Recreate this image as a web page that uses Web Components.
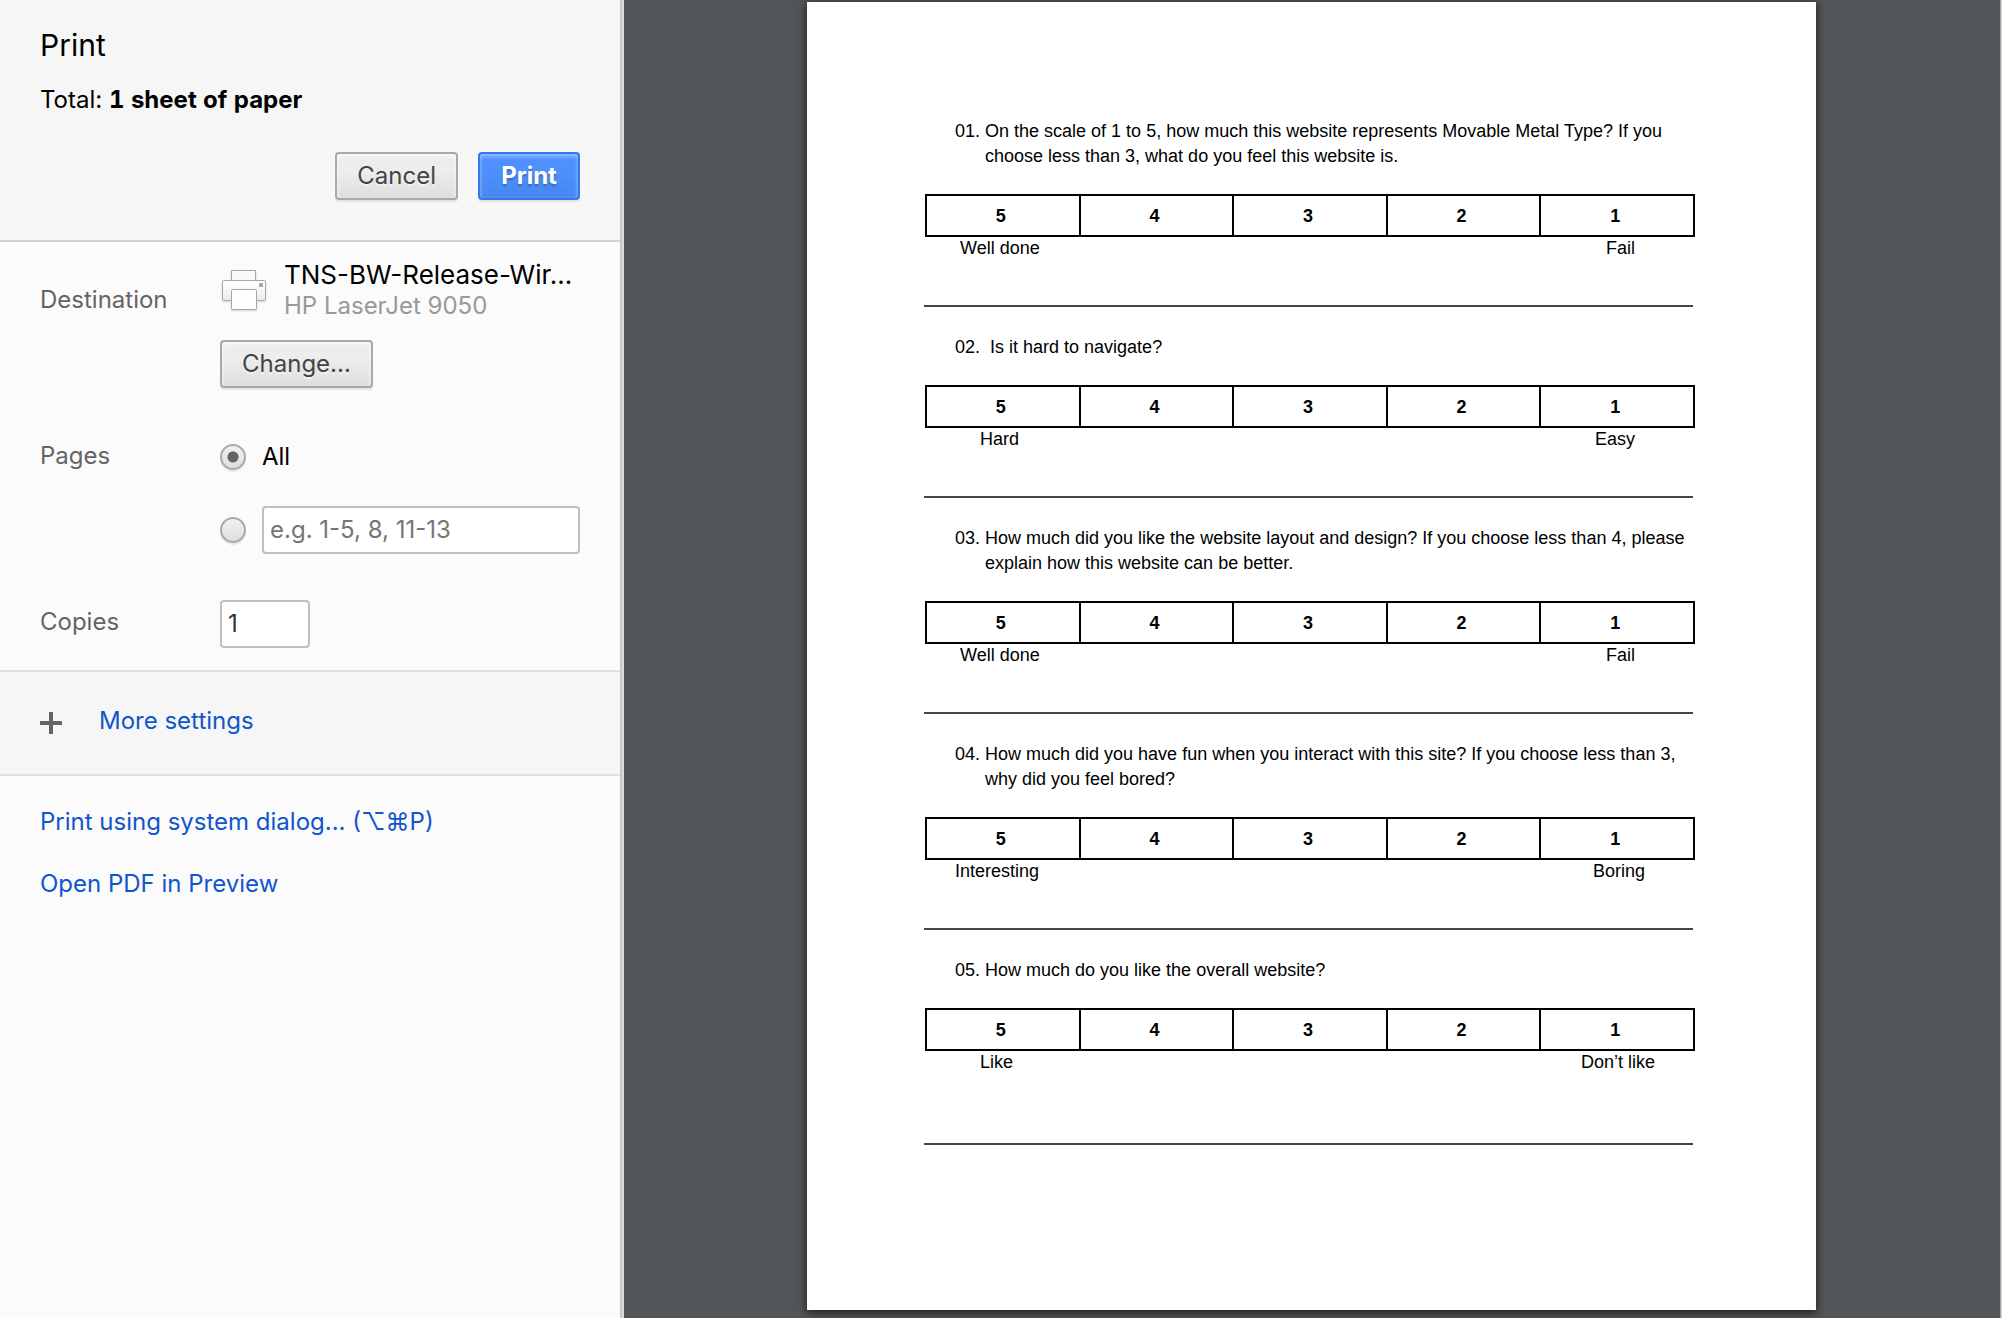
<!DOCTYPE html>
<html lang="en">
<head>
<meta charset="utf-8">
<title>Print</title>
<style>
  html, body { margin: 0; min-height: 100%; }
  body { min-height: 100vh; display: flex; background: #525659; font-family: Inter, Roboto, sans-serif; font-size: 24px; line-height: 30px; color: #000; }
  print-panel { flex: 0 0 622px; min-width: 0; }
  print-preview { flex: 1 1 0; min-width: 0; }
</style>
</head>
<body>
<print-panel></print-panel>
<print-preview>
  <survey-question number="01" high="       Well done" low="Fail            ">On the scale of 1 to 5, how much this website represents Movable Metal Type? If you choose less than 3, what do you feel this website is.</survey-question>
  <survey-question number="02" high="           Hard" low="Easy            ">&nbsp;Is it hard to navigate?</survey-question>
  <survey-question number="03" high="       Well done" low="Fail            ">How much did you like the website layout and design? If you choose less than 4, please explain how this website can be better.</survey-question>
  <survey-question number="04" high="      Interesting" low="Boring          ">How much did you have fun when you interact with this site? If you choose less than 3, why did you feel bored?</survey-question>
  <survey-question number="05" high="           Like" low="Don’t like        " roomy>How much do you like the overall website?</survey-question>
</print-preview>

<script>
const attach = (host, html) => { host.attachShadow({ mode: 'open' }).innerHTML = html; };

customElements.define('push-button', class extends HTMLElement {
  constructor() {
    super();
    attach(this, `
      <style>
        :host { display: inline-block; }
        button {
          display: block; box-sizing: border-box; height: 48px; min-width: 102px; margin: 0; padding: 0 20px;
          font: inherit; line-height: 30px; color: #444; border: 2px solid #a9a9a9; border-radius: 4px;
          background: linear-gradient(#ededed, #ededed 38%, #dedede);
          box-shadow: 0 2px 0 rgba(0,0,0,.08), inset 0 2px 4px rgba(255,255,255,.75);
          text-shadow: 0 2px 0 #f0f0f0;
        }
        :host([primary]) button {
          color: #fff; font-weight: 700; border-color: #3079ed;
          background: linear-gradient(#4d90fe, #4d90fe 38%, #4787ed);
          box-shadow: 0 2px 0 rgba(0,0,0,.08), inset 0 2px 4px rgba(255,255,255,.5);
          text-shadow: 0 2px 2px rgba(0,0,0,.25);
        }
      </style>
      <button type="button"><slot></slot></button>`);
  }
});

customElements.define('setting-row', class extends HTMLElement {
  constructor() {
    super();
    attach(this, `
      <style>
        :host { display: flex; align-items: flex-start; }
        .label { flex: 0 0 180px; padding-top: var(--label-top, 0); color: #646464; }
        .control { flex: 1; min-width: 0; }
      </style>
      <div class="label"><slot name="label"></slot></div>
      <div class="control"><slot></slot></div>`);
  }
});

customElements.define('printer-icon', class extends HTMLElement {
  constructor() {
    super();
    attach(this, `
      <style>:host { display: block; width: 48px; height: 44px; } svg { display: block; filter: drop-shadow(0 1px 1px rgba(0,0,0,.15)); }</style>
      <svg width="48" height="44" viewBox="0 0 48 44" fill="none" stroke="#a6a6a6" aria-hidden="true">
        <defs><linearGradient id="g" x1="0" y1="0" x2="0" y2="1"><stop offset="0" stop-color="#fff"/><stop offset="1" stop-color="#ececec"/></linearGradient></defs>
        <rect x="11.5" y="1.5" width="24" height="11" fill="#fafafa"/>
        <rect x="2.5" y="11.5" width="43" height="20" rx="1" fill="url(#g)"/>
        <rect x="39" y="14" width="4" height="4" fill="#aaa" stroke="none"/>
        <rect x="11.5" y="20.5" width="25" height="20" rx="1" fill="#fefefe"/>
      </svg>`);
  }
});

customElements.define('print-panel', class extends HTMLElement {
  constructor() {
    super();
    attach(this, `
      <style>
        :host { display: block; box-sizing: border-box; background: #fbfbfb; border-right: 2px solid #c8c8c8; box-shadow: 2px 0 0 #d9d9d9; position: relative; z-index: 1; }
        header { padding: 27px 40px 40px; background: #f6f6f6; border-bottom: 2px solid #d2d2d2; }
        h1 { margin: 0; font-size: 30px; line-height: 36px; font-weight: 400; }
        p { margin: 22px 0 37px; }
        b { font-variant-numeric: tabular-nums; }
        .actions { display: flex; justify-content: flex-end; gap: 20px; }
        .settings { padding: 17px 40px 22px; }
        .destination { --label-top: 26px; }
        .pages { --label-top: 0px; margin-top: 53px; }
        .copies { --label-top: 7px; margin-top: 46px; }
        .printer { display: flex; gap: 16px; }
        .printer printer-icon { margin-top: 10px; }
        .name { font-size: 26px; line-height: 32px; }
        .model { color: #999; }
        push-button.change { margin-top: 19px; }
        .option { display: flex; align-items: center; gap: 16px; }
        .all { padding-top: 1px; }
        .range { margin-top: 34px; }
        input { box-sizing: border-box; margin: 0; font: inherit; }
        input[type=radio] {
          appearance: none; flex: none; width: 26px; height: 26px; border: 2px solid #a9a9a9; border-radius: 50%;
          background: linear-gradient(#f0f0f0, #dedede); box-shadow: 0 2px 0 rgba(0,0,0,.07);
        }
        input[type=radio]:checked { background: radial-gradient(circle, #636363 5px, transparent 6px), linear-gradient(#f0f0f0, #dedede); }
        input[type=text] { height: 48px; padding: 0 6px 2px; border: 2px solid #bfbfbf; border-radius: 4px; background: #fff; color: #333; }
        input::placeholder { color: #757575; opacity: 1; }
        .range input[type=text] { flex: 1; min-width: 0; width: 0; }
        .copies input { display: block; width: 90px; }
        a { color: #15c; text-decoration: none; }
        .more { display: flex; align-items: flex-end; gap: 36px; padding: 34px 40px 38px; background: #f6f6f6; border: solid #e0e0e0; border-width: 2px 0; }
        .links { display: flex; flex-direction: column; align-items: flex-start; gap: 32px; padding: 31px 40px; }
        svg { display: block; }
      </style>
      <header>
        <h1>Print</h1>
        <p>Total: <b>1 sheet of paper</b></p>
        <div class="actions"><push-button>Cancel</push-button><push-button primary>Print</push-button></div>
      </header>
      <div class="settings">
        <setting-row class="destination">
          <span slot="label">Destination</span>
          <div class="printer"><printer-icon></printer-icon><div><div class="name">TNS-BW-Release-Wir...</div><div class="model">HP LaserJet 9050</div></div></div>
          <push-button class="change">Change...</push-button>
        </setting-row>
        <setting-row class="pages">
          <span slot="label">Pages</span>
          <div class="option all"><input type="radio" name="pages" id="all" checked><label for="all">All</label></div>
          <div class="option range"><input type="radio" name="pages" aria-label="Page range"><input type="text" aria-label="Pages to print" placeholder="e.g. 1-5, 8, 11-13"></div>
        </setting-row>
        <setting-row class="copies">
          <label slot="label" for="copies">Copies</label>
          <input type="text" id="copies" inputmode="numeric" value="1">
        </setting-row>
      </div>
      <div class="more">
        <svg width="23" height="24" viewBox="0 0 23 24" aria-hidden="true"><path d="M0 11H22M11 0V22" stroke="#646464" stroke-width="4"/></svg>
        <a href="#more">More settings</a>
      </div>
      <nav class="links">
        <a href="#system">Print using system dialog... (⌥⌘P)</a>
        <a href="#pdf">Open PDF in Preview</a>
      </nav>`);
  }
});

customElements.define('print-preview', class extends HTMLElement {
  constructor() {
    super();
    attach(this, `
      <style>
        :host { display: block; box-sizing: border-box; padding: 2px 3px 8px; border-right: 1px solid #d8d8d8; border-bottom: 1px solid #5a5156; background: #525659; box-shadow: inset -1px 0 0 #a3a1a0; }
        article {
          box-sizing: border-box; width: 100%; max-width: 1009px; margin: 0 auto; padding: 117px 121px 165px 118px;
          background: #fff; box-shadow: 0 2px 8px 1px rgba(0,0,0,.6);
          font-family: "Liberation Sans", Arial, sans-serif; font-size: 18px; line-height: 25px;
        }
      </style>
      <article><slot></slot></article>`);
  }
});

customElements.define('survey-question', class extends HTMLElement {
  connectedCallback() {
    if (this.shadowRoot) return;
    attach(this, `
      <style>
        :host { display: block; }
        :host(:not(:first-of-type)) { margin-top: 28px; }
        p { margin: 0 0 25px; padding-left: 60px; text-indent: -30px; }
        table { width: 100%; height: 43px; table-layout: fixed; border-collapse: collapse; }
        td { padding: 0 4px 0 0; border: 2px solid #000; text-align: center; font-weight: 700; line-height: 24px; }
        .ends { display: flex; justify-content: space-between; white-space: pre; line-height: 22px; }
        hr { margin: 46px 2px 0 -1px; border: 0; border-top: 2px solid #454545; }
        :host([roomy]) hr { margin-top: 70px; }
      </style>
      <p>${this.getAttribute('number')}. <slot></slot></p>
      <table><tr><td>5</td><td>4</td><td>3</td><td>2</td><td>1</td></tr></table>
      <div class="ends"><span>${this.getAttribute('high')}</span><span>${this.getAttribute('low')}</span></div>
      <hr>`);
  }
});
</script>
</body>
</html>
